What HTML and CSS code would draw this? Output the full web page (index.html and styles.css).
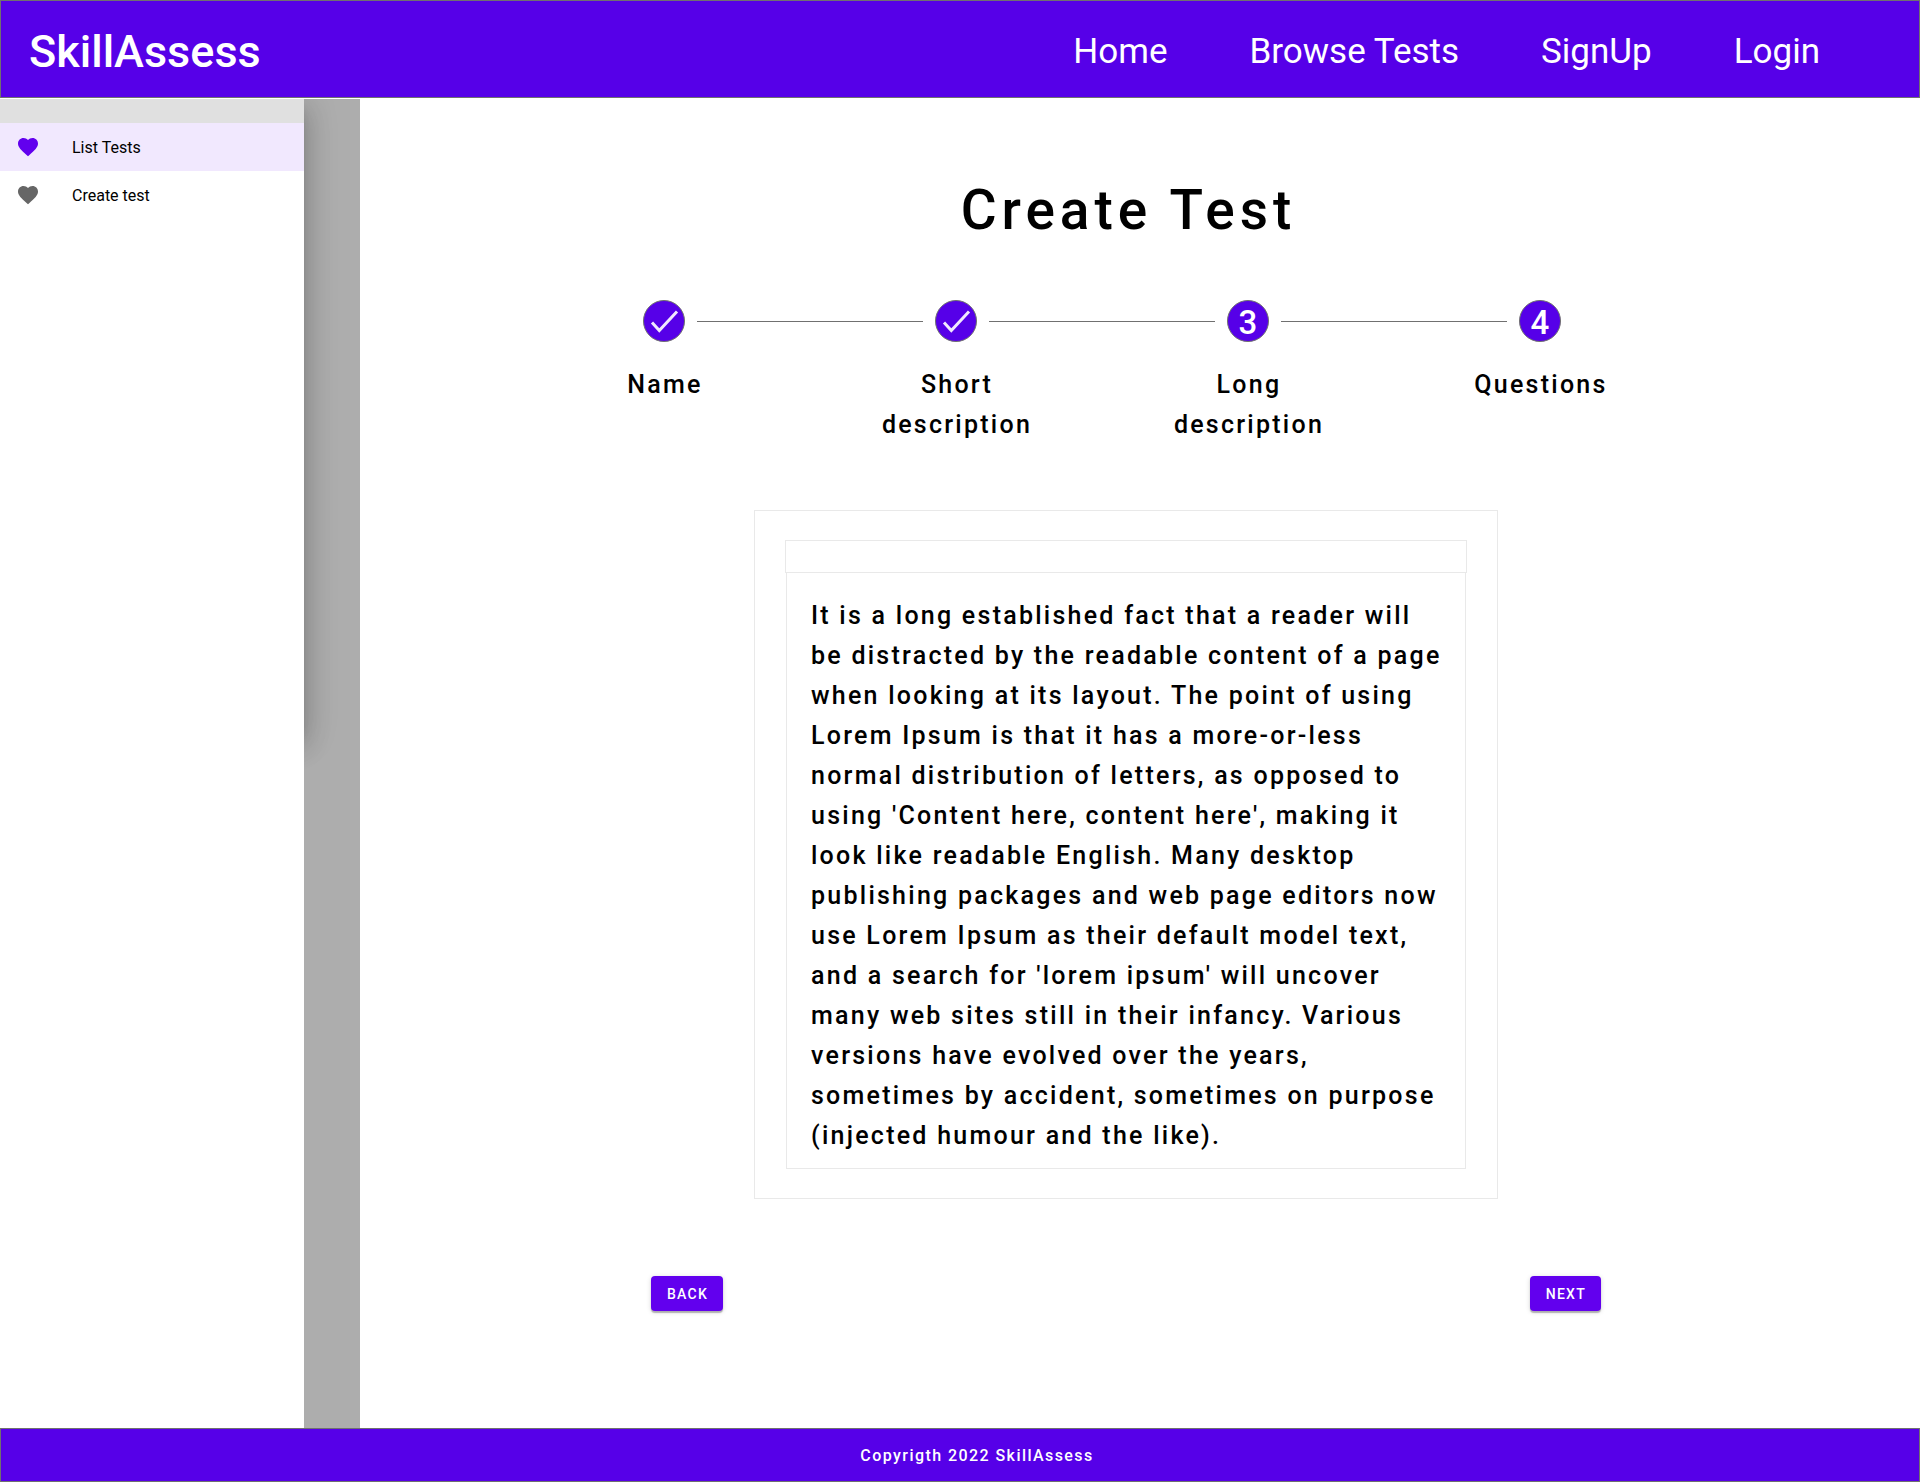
FILE: index.html
```html
<!DOCTYPE html>
<html lang="en">
<head>
  <meta charset="utf-8">
  <meta name="viewport" content="width=device-width, initial-scale=1">
  <title>SkillAssess</title>
  <link rel="stylesheet" href="styles.css">
</head>
<body>
  <header class="site-header">
    <a class="logo" href="#">SkillAssess</a>
    <nav class="site-nav" aria-label="Main">
      <a href="#">Home</a>
      <a href="#">Browse Tests</a>
      <a href="#">SignUp</a>
      <a href="#">Login</a>
    </nav>
  </header>

  <div class="layout">
    <aside class="drawer">
      <div class="drawer-header"></div>
      <nav aria-label="Tests">
        <a class="drawer-item drawer-item-active" href="#" aria-current="page">
          <svg class="drawer-icon" viewBox="0 0 24 24" aria-hidden="true"><path d="M12 21.35l-1.45-1.32C5.4 15.36 2 12.28 2 8.5 2 5.42 4.42 3 7.5 3c1.74 0 3.41.81 4.5 2.09C13.09 3.81 14.76 3 16.5 3 19.58 3 22 5.42 22 8.5c0 3.78-3.4 6.86-8.55 11.54L12 21.35z"/></svg>
          <span>List Tests</span>
        </a>
        <a class="drawer-item" href="#">
          <svg class="drawer-icon" viewBox="0 0 24 24" aria-hidden="true"><path d="M12 21.35l-1.45-1.32C5.4 15.36 2 12.28 2 8.5 2 5.42 4.42 3 7.5 3c1.74 0 3.41.81 4.5 2.09C13.09 3.81 14.76 3 16.5 3 19.58 3 22 5.42 22 8.5c0 3.78-3.4 6.86-8.55 11.54L12 21.35z"/></svg>
          <span>Create test</span>
        </a>
      </nav>
    </aside>
    <div class="scrim"></div>

    <main class="content">
      <h1 class="title">Create Test</h1>

      <ol class="steps">
        <li class="step">
          <div class="step-track">
            <span class="step-marker">
              <svg viewBox="0 0 42 42" aria-hidden="true"><path d="M9 22.5 16.3 30.5 34 11.5"/></svg>
            </span>
          </div>
          <span class="step-label">Name</span>
        </li>
        <li class="step">
          <div class="step-track">
            <span class="step-marker">
              <svg viewBox="0 0 42 42" aria-hidden="true"><path d="M9 22.5 16.3 30.5 34 11.5"/></svg>
            </span>
          </div>
          <span class="step-label">Short description</span>
        </li>
        <li class="step" aria-current="step">
          <div class="step-track"><span class="step-marker">3</span></div>
          <span class="step-label">Long description</span>
        </li>
        <li class="step">
          <div class="step-track"><span class="step-marker">4</span></div>
          <span class="step-label">Questions</span>
        </li>
      </ol>

      <form class="form">
        <div class="editor">
          <div class="editor-toolbar"></div>
          <textarea class="editor-text" rows="14" aria-label="Long description">It is a long established fact that a reader will be distracted by the readable content of a page when looking at its layout. The point of using Lorem Ipsum is that it has a more-or-less normal distribution of letters, as opposed to using 'Content here, content here', making it look like readable English. Many desktop publishing packages and web page editors now use Lorem Ipsum as their default model text, and a search for 'lorem ipsum' will uncover many web sites still in their infancy. Various versions have evolved over the years, sometimes by accident, sometimes on purpose (injected humour and the like).</textarea>
        </div>
        <div class="actions">
          <button class="button" type="button">BACK</button>
          <button class="button" type="button">NEXT</button>
        </div>
      </form>
    </main>
  </div>

  <footer class="site-footer">Copyrigth 2022 SkillAssess</footer>
</body>
</html>
```
FILE: styles.css
```css
:root {
  --primary: #6200ee;
  --primary-dark: #5600e8;
  --outline: #707070;
  --hairline: #e9e9e9;
  --tracking: 0.09em;
}

* {
  box-sizing: border-box;
}

body {
  display: flex;
  flex-direction: column;
  min-height: 100vh;
  margin: 0;
  background: #fff;
  color: #000;
  font-family: Roboto, "Liberation Sans", sans-serif;
}

a {
  color: inherit;
  text-decoration: none;
}

/* Header */

.site-header {
  display: flex;
  align-items: center;
  justify-content: space-between;
  height: 98px;
  padding: 0 99px 0 28px;
  margin-bottom: 1px;
  border: 1px solid var(--outline);
  background: var(--primary-dark);
  color: #fff;
}

.logo {
  padding-top: 4px;
  font-size: 45px;
  font-weight: 500;
}

.site-nav {
  display: flex;
  gap: 82px;
  padding-top: 4px;
  font-size: 35px;
}

/* Page columns */

.layout {
  display: flex;
  flex: 1;
}

.drawer {
  flex: none;
  width: 304px;
  background: #fff;
}

.drawer-header {
  height: 24px;
  background: #e0e0e0;
}

.drawer-item {
  display: flex;
  align-items: center;
  gap: 32px;
  height: 48px;
  padding: 0 16px;
  font-size: 16px;
}

.drawer-item-active {
  background: #f1e8fe;
}

.drawer-icon {
  width: 24px;
  height: 24px;
  fill: #666;
}

.drawer-item-active .drawer-icon {
  fill: var(--primary);
}

.scrim {
  flex: none;
  width: 56px;
  overflow: hidden;
  background: #adadad;
}

/* Shadow cast by the drawer panel onto the scrim */
.scrim::before {
  content: "";
  display: block;
  width: 304px;
  height: 632px;
  margin-left: -304px;
  box-shadow:
    0 8px 10px -5px rgba(0, 0, 0, 0.2),
    0 16px 24px 2px rgba(0, 0, 0, 0.14),
    0 6px 30px 5px rgba(0, 0, 0, 0.12);
}

.content {
  display: flex;
  flex: 1;
  flex-direction: column;
  align-items: center;
  min-width: 0;
  padding: 79px 28px 80px 0;
}

.title {
  margin: 0 0 58px;
  padding-left: 5px;
  font-size: 55px;
  font-weight: 500;
  letter-spacing: var(--tracking);
  line-height: 64px;
}

/* Stepper */

.steps {
  display: grid;
  grid-template-columns: repeat(4, 1fr);
  width: 100%;
  max-width: 1216px;
  margin: 0 0 65px;
  padding: 0 48px 0 0;
  list-style: none;
}

.step {
  display: flex;
  flex-direction: column;
  align-items: center;
  gap: 23px;
}

.step-track {
  display: flex;
  align-items: center;
  gap: 12px;
  width: 100%;
}

.step-track::before,
.step-track::after {
  content: "";
  flex: 1;
  height: 1px;
  margin-top: 1px;
  background: var(--outline);
}

.step:first-child .step-track::before,
.step:last-child .step-track::after {
  visibility: hidden;
}

.step-marker {
  flex: none;
  width: 42px;
  height: 42px;
  border: 1px solid var(--outline);
  border-radius: 50%;
  background: var(--primary-dark);
  color: #fff;
  font-size: 33px;
  font-weight: 500;
  line-height: 44px;
  text-align: center;
}

.step-marker svg {
  display: block;
  width: 42px;
  height: 42px;
  margin: -1px;
  fill: none;
  stroke: #f1e8fe;
  stroke-width: 3;
}

.step-label {
  max-width: 180px;
  padding-left: 2px;
  font-size: 25px;
  font-weight: 500;
  letter-spacing: var(--tracking);
  line-height: 40px;
  text-align: center;
}

/* Form */

.form {
  display: flex;
  flex-direction: column;
  align-items: center;
  gap: 77px;
  width: 100%;
  max-width: 950px;
}

.editor {
  width: 100%;
  max-width: 744px;
  padding: 29px 30px;
  border: 1px solid var(--hairline);
}

.editor-toolbar {
  height: 33px;
  border: 1px solid var(--hairline);
}

.editor-text {
  display: block;
  width: calc(100% - 2px);
  margin: 0 1px;
  padding: 23px 20px 12px 24px;
  overflow: hidden;
  border: 1px solid var(--hairline);
  border-top: 0;
  outline: 0;
  background: #fff;
  color: #000;
  font: 500 25px/40px Roboto, "Liberation Sans", sans-serif;
  letter-spacing: var(--tracking);
  resize: none;
}

.actions {
  display: flex;
  justify-content: space-between;
  width: 100%;
}

.button {
  height: 35px;
  padding: 0 15px 0 16px;
  border: 0;
  border-radius: 4px;
  background: var(--primary);
  box-shadow:
    0 2px 1px rgba(0, 0, 0, 0.25),
    0 1px 5px rgba(0, 0, 0, 0.16);
  color: #fff;
  font: 500 14px/16px Roboto, "Liberation Sans", sans-serif;
  letter-spacing: var(--tracking);
}

/* Footer */

.site-footer {
  display: flex;
  align-items: center;
  justify-content: center;
  height: 54px;
  padding-left: 34px;
  border: 1px solid var(--outline);
  background: var(--primary-dark);
  color: #fff;
  font-size: 16px;
  font-weight: 500;
  letter-spacing: var(--tracking);
}
```
